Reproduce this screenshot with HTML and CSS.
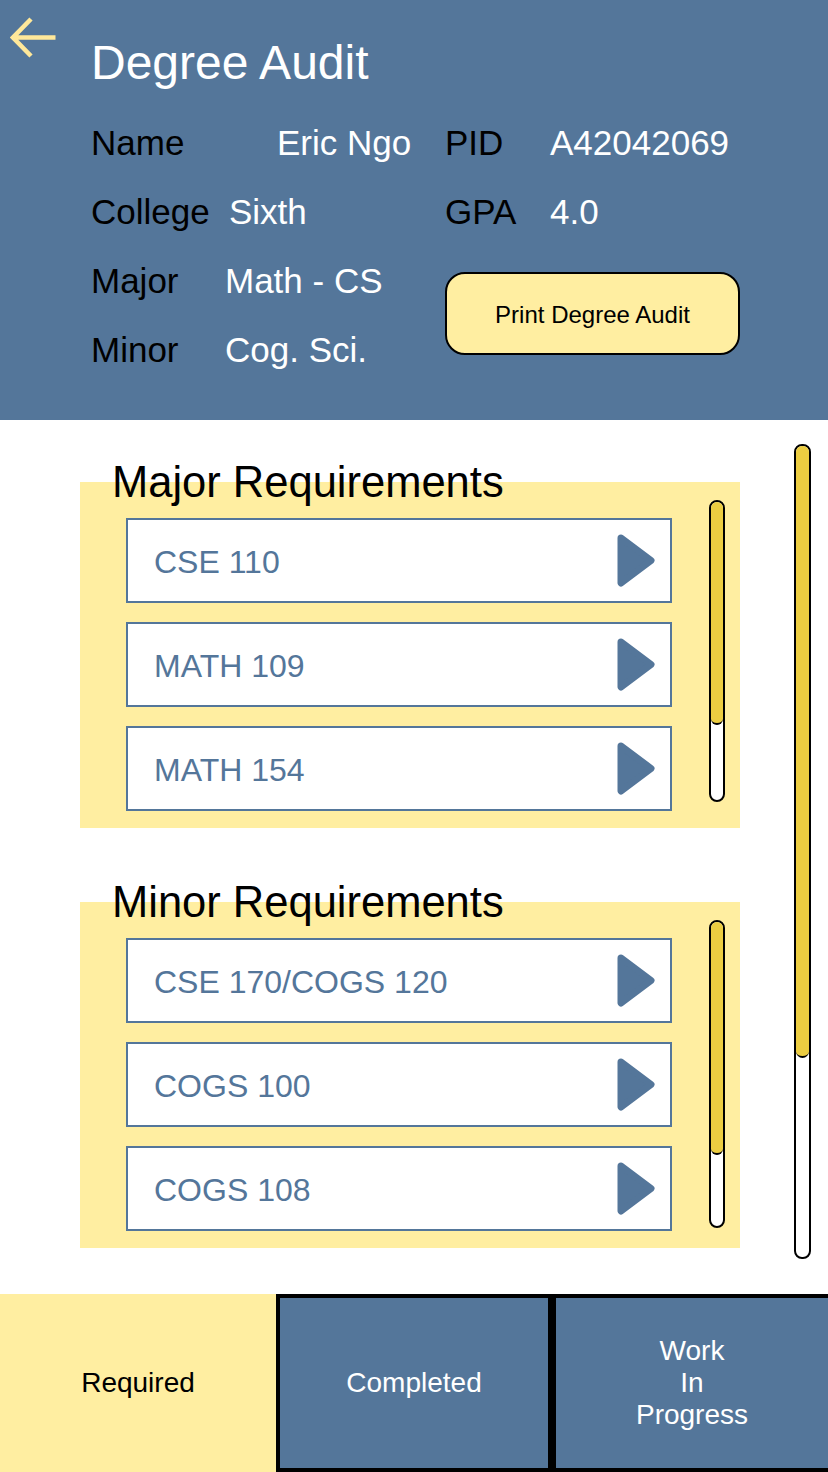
FILE: index.html
```html
<!DOCTYPE html>
<html>

	<head>
		<meta charset="UTF-8">
		<title>Degree Audit</title>
		<link rel="stylesheet" href="styles.css">
	</head>

	<body>

		<div class="page">
			<!-- 顶部信息 -->
			<div class="header">
				<svg class="back" width="48" height="48" viewBox="0 0 48 48">
					<path d="M3 23.5 H45.5 M21 5 L3 23.5 L21 42" fill="none" stroke="#ffe89a" stroke-width="4.5"/>
				</svg>
				<div class="header_main">
					<h1 class="title">Degree Audit</h1>
					<div class="info">
						<div class="info_left">
							<div class="row"><span class="label">Name</span><span class="value value_name">Eric Ngo</span></div>
							<div class="row"><span class="label">College</span><span class="value value_college">Sixth</span></div>
							<div class="row"><span class="label">Major</span><span class="value">Math - CS</span></div>
							<div class="row"><span class="label">Minor</span><span class="value">Cog. Sci.</span></div>
						</div>
						<div class="info_right">
							<div class="row"><span class="label">PID</span><span class="value">A42042069</span></div>
							<div class="row"><span class="label">GPA</span><span class="value">4.0</span></div>
							<button class="print_btn">Print Degree Audit</button>
						</div>
					</div>
				</div>
			</div>

			<!-- 课程要求 -->
			<div class="content">
				<div class="sections">
					<div class="section">
						<h2 class="section_title">Major Requirements</h2>
						<div class="section_box">
							<ul class="course_list">
								<li class="course"><span>CSE 110</span><svg width="38" height="53" viewBox="0 0 38 53"><polygon points="4,4 34,26.5 4,49" fill="#54769a" stroke="#54769a" stroke-width="7" stroke-linejoin="round"/></svg></li>
								<li class="course"><span>MATH 109</span><svg width="38" height="53" viewBox="0 0 38 53"><polygon points="4,4 34,26.5 4,49" fill="#54769a" stroke="#54769a" stroke-width="7" stroke-linejoin="round"/></svg></li>
								<li class="course"><span>MATH 154</span><svg width="38" height="53" viewBox="0 0 38 53"><polygon points="4,4 34,26.5 4,49" fill="#54769a" stroke="#54769a" stroke-width="7" stroke-linejoin="round"/></svg></li>
							</ul>
							<div class="scroll"><div class="scroll_thumb" style="height:223px"></div></div>
						</div>
					</div>
					<div class="section">
						<h2 class="section_title">Minor Requirements</h2>
						<div class="section_box">
							<ul class="course_list">
								<li class="course"><span>CSE 170/COGS 120</span><svg width="38" height="53" viewBox="0 0 38 53"><polygon points="4,4 34,26.5 4,49" fill="#54769a" stroke="#54769a" stroke-width="7" stroke-linejoin="round"/></svg></li>
								<li class="course"><span>COGS 100</span><svg width="38" height="53" viewBox="0 0 38 53"><polygon points="4,4 34,26.5 4,49" fill="#54769a" stroke="#54769a" stroke-width="7" stroke-linejoin="round"/></svg></li>
								<li class="course"><span>COGS 108</span><svg width="38" height="53" viewBox="0 0 38 53"><polygon points="4,4 34,26.5 4,49" fill="#54769a" stroke="#54769a" stroke-width="7" stroke-linejoin="round"/></svg></li>
							</ul>
							<div class="scroll scroll_minor"><div class="scroll_thumb" style="height:233px"></div></div>
						</div>
					</div>
				</div>
				<div class="scroll page_scroll"><div class="scroll_thumb" style="height:612px"></div></div>
			</div>

			<!-- 底部标签 -->
			<div class="tabs">
				<div class="tab tab_active">Required</div>
				<div class="tab">Completed</div>
				<div class="tab tab_last">Work<br>In<br>Progress</div>
			</div>
		</div>

	</body>

</html>
```

FILE: styles.css
```css
* {
	margin: 0px;
	padding: 0px;
	box-sizing: border-box;
}
ul{
	list-style: none;
}
body {
	width: 828px;
	height: 1472px;
	overflow: hidden;
	background: #FFFFFF;
	font-family: "Liberation Sans", Arial, sans-serif;
}
.page {
	display: flex;
	flex-direction: column;
	height: 1472px;
}
.header {
	height: 420px;
	flex: none;
	display: flex;
	padding: 14px 0 0 10px;
	background: #54769a;
}
.back {
	flex: none;
}
.header_main {
	margin-left: 33px;
}
.title {
	margin-top: 25px;
	font-size: 48px;
	line-height: 48px;
	font-weight: normal;
	color: #FFFFFF;
}
.info {
	display: flex;
	margin-top: 21px;
}
.info_left {
	width: 354px;
}
.row {
	display: flex;
	font-size: 35px;
	line-height: 69px;
	white-space: nowrap;
}
.label {
	width: 134px;
	flex: none;
	color: #000000;
}
.info_right .label {
	width: 105px;
}
.value {
	color: #FFFFFF;
}
.value_name {
	margin-left: 52px;
}
.value_college {
	margin-left: 4px;
}
.print_btn {
	display: block;
	margin-top: 26px;
	width: 295px;
	height: 83px;
	padding-top: 3px;
	border: 2px solid #000000;
	border-radius: 20px;
	background: #ffeea1;
	font-family: inherit;
	font-size: 24px;
	color: #000000;
}
.content {
	height: 874px;
	flex: none;
	display: flex;
	align-items: flex-start;
	padding: 24px 0 0 80px;
}
.sections {
	width: 660px;
	flex: none;
	margin-top: 16px;
}
.section + .section {
	margin-top: 52px;
}
.section_title {
	margin: 0 0 -22px 32px;
	font-size: 43.5px;
	line-height: 44px;
	font-weight: normal;
	color: #000000;
}
.section_box {
	display: flex;
	align-items: flex-start;
	padding: 18px 15px 17px 46px;
	background: #ffeea1;
}
.course_list {
	width: 546px;
	flex: none;
	display: flex;
	flex-direction: column;
	gap: 19px;
	padding-top: 18px;
}
.course {
	height: 85px;
	display: flex;
	align-items: center;
	justify-content: space-between;
	padding: 3px 15px 0 26px;
	border: 2px solid #54769a;
	background: #FFFFFF;
	font-size: 32px;
	color: #54769a;
}
.course svg {
	margin-top: -3px;
}
.scroll {
	width: 16px;
	flex: none;
	border: 2px solid #000000;
	border-radius: 8px;
	background: #FFFFFF;
	overflow: hidden;
}
.section_box .scroll {
	margin-left: 37px;
	height: 302px;
}
.section_box .scroll_minor {
	height: 308px;
}
.scroll_thumb {
	background: #eccd41;
	border-bottom: 2px solid #000000;
	border-radius: 0 0 7px 7px;
}
.page_scroll {
	width: 17px;
	height: 815px;
	margin-left: 54px;
}
.tabs {
	display: flex;
	height: 178px;
	flex: none;
}
.tab {
	width: 276px;
	display: flex;
	align-items: center;
	justify-content: center;
	text-align: center;
	border: 4px solid #000000;
	background: #54769a;
	font-size: 28px;
	line-height: 32px;
	color: #FFFFFF;
}
.tab_active {
	border: none;
	background: #ffeea1;
	color: #000000;
}
.tab_last {
	border-right: none;
}
```
